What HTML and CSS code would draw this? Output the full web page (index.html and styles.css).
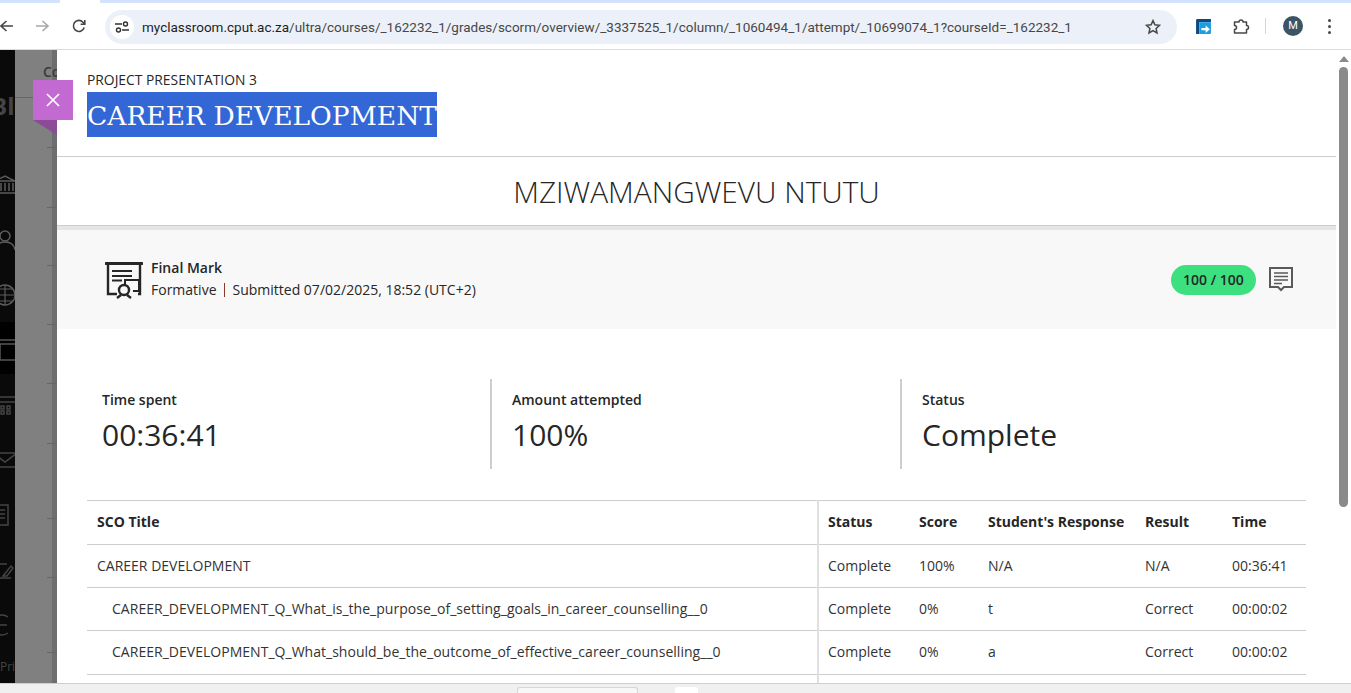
FILE: index.html
```html
<!DOCTYPE html>
<html lang="en">
<head>
  <meta charset="UTF-8">
  <meta name="viewport" content="width=device-width, initial-scale=1.0">
  <title>Career Development</title>
  <link rel="stylesheet" href="styles.css">
</head>
<body>
  <div class="tabstrip">
    <div class="tab-left"></div>
    <div class="tab-active"></div>
    <div class="tab-right"></div>
  </div>

  <header class="toolbar">
    <svg class="nav-icon back" viewBox="0 0 16 16"><path d="M14 8H2M7.500 3L2 8l5.500 5" fill="none" stroke="#474747" stroke-width="1.600"/></svg>
    <svg class="nav-icon forward" viewBox="0 0 16 16"><path d="M2 8h12M8.500 3L14 8l-5.500 5" fill="none" stroke="#a8a8a8" stroke-width="1.600"/></svg>
    <svg class="nav-icon reload" viewBox="0 0 16 16"><path d="M13.200 9.500A5.500 5.500 0 1 1 12 4.200L13.500 6M13.800 2v4.200H9.600" fill="none" stroke="#474747" stroke-width="1.600"/></svg>
    <div class="omnibox">
      <span class="site-info">
        <svg viewBox="0 0 16 16" width="16" height="16"><path d="M1 5h7M8 11h7" stroke="#303030" stroke-width="1.400" fill="none"/><circle cx="11.500" cy="5" r="2" fill="none" stroke="#303030" stroke-width="1.400"/><circle cx="4.500" cy="11" r="2" fill="none" stroke="#303030" stroke-width="1.400"/></svg>
      </span>
      <span class="url"><b>myclassroom.cput.ac.za</b>/ultra/courses/_162232_1/grades/scorm/overview/_3337525_1/column/_1060494_1/attempt/_10699074_1?courseId=_162232_1</span>
      <svg class="star" viewBox="0 0 16 16"><path d="M8 1.600l1.900 4.200 4.600.5-3.400 3.100.9 4.600L8 11.700 4 14l.9-4.600L1.500 6.300l4.600-.5z" fill="none" stroke="#474747" stroke-width="1.500"/></svg>
    </div>
    <svg class="ext-logo" viewBox="0 0 16 16"><path d="M1 15V2a1 1 0 0 1 1-1h13v3H4v11z" fill="#0d4a7f"/><path d="M4 4h11v10a1 1 0 0 1-1 1H4z" fill="#1b9ee0"/><path d="M6 9.500h4V7l4 3.500-4 3.500v-2.500H6z" fill="#fff"/></svg>
    <svg class="ext-puzzle" viewBox="0 0 18 18"><path d="M2.500 5H7a2 2 0 0 1 4 0h3.500v3.500a2 2 0 0 1 0 4V16H2.500v-3.500a2 2 0 0 0 0-4z" fill="none" stroke="#474747" stroke-width="1.500" stroke-linejoin="round"/></svg>
    <div class="toolbar-sep"></div>
    <div class="avatar">M</div>
    <div class="kebab"><i></i><i></i><i></i></div>
  </header>

  <div class="viewport">
    <aside class="course-behind">
      <div class="nav-rail">
        <div class="rail-logo">Bl</div>
        <svg class="rail-icon" viewBox="0 0 24 24"><path d="M2 8l10-5 10 5zM4 10v8M8 10v8M12 10v8M16 10v8M20 10v8M2 20h20" fill="none" stroke="#5c5c5c" stroke-width="1.500"/></svg>
        <svg class="rail-icon" viewBox="0 0 24 24"><circle cx="12" cy="8" r="5" fill="none" stroke="#5c5c5c" stroke-width="1.500"/><path d="M2 22c1-6 5-8 10-8s9 2 10 8" fill="none" stroke="#5c5c5c" stroke-width="1.500"/></svg>
        <svg class="rail-icon" viewBox="0 0 24 24"><circle cx="12" cy="12" r="10" fill="none" stroke="#5c5c5c" stroke-width="1.500"/><path d="M2 12h20M12 2v20M4 6h16M4 18h16" fill="none" stroke="#5c5c5c" stroke-width="1.200"/></svg>
        <svg class="rail-icon" viewBox="0 0 24 24"><path d="M3 2h20v20H3zM7 6h16M7 6v16" fill="none" stroke="#555" stroke-width="1.500"/></svg>
        <svg class="rail-icon" viewBox="0 0 24 24"><path d="M0 4h24M0 9h24M2 13h3v3H2zM8 13h3v3H8zM14 13h3v3h-3zM2 18h3v3H2zM8 18h3v3H8zM14 18h3v3h-3z" fill="none" stroke="#444" stroke-width="1.500"/></svg>
        <svg class="rail-icon" viewBox="0 0 24 24"><path d="M0 5h24v14H0zM0 5l12 9 12-9" fill="none" stroke="#444" stroke-width="1.500"/></svg>
        <svg class="rail-icon" viewBox="0 0 24 24"><path d="M1 2h14v20H1zM4 7h8M4 11h8M4 15h8" fill="none" stroke="#444" stroke-width="1.500"/></svg>
        <svg class="rail-icon" viewBox="0 0 24 24"><path d="M0 6h14M0 20h18M10 18l8-10 2 2-6 8z" fill="none" stroke="#444" stroke-width="1.500"/></svg>
        <svg class="rail-icon" viewBox="0 0 24 24"><path d="M15 4a10 10 0 1 0 0 16M0 12h14M5 7l-5 5 5 5" fill="none" stroke="#444" stroke-width="1.500"/></svg>
        <div class="rail-privacy">Priv</div>
      </div>
      <div class="course-content">
        <div class="course-label">Co</div>
      </div>
    </aside>

    <button class="close-btn">
      <svg viewBox="0 0 14 14" width="14" height="14"><path d="M1 1l12 12M13 1L1 13" stroke="#fff" stroke-width="1.700"/></svg>
    </button>
    <div class="close-fold"></div>

    <main class="panel">
      <div class="panel-head">
        <div class="eyebrow">PROJECT PRESENTATION 3</div>
        <h1 class="panel-title"><span>CAREER DEVELOPMENT</span></h1>
      </div>

      <h2 class="student-name">MZIWAMANGWEVU NTUTU</h2>

      <section class="final-mark">
        <svg class="cert-icon" viewBox="0 0 38 38">
          <path d="M1 2.500h36" stroke="#262626" stroke-width="3" stroke-linecap="round"/>
          <path d="M3 3v30h9M35 3v30h-2" fill="none" stroke="#262626" stroke-width="2.400"/>
          <path d="M7 10h20M7 15h20M7 19.500h10" stroke="#262626" stroke-width="2"/>
          <path d="M20 25v-6h14v11h-6" fill="none" stroke="#262626" stroke-width="2"/>
          <circle cx="19" cy="29" r="5" fill="#f8f8f8" stroke="#262626" stroke-width="2.400"/>
          <path d="M12 37l4-3M26 37l-4-3" stroke="#262626" stroke-width="2.400"/>
        </svg>
        <div class="mark-text">
          <div class="mark-title">Final Mark</div>
          <div class="mark-meta"><span>Formative</span><span class="meta-date">Submitted 07/02/2025, 18:52 (UTC+2)</span></div>
        </div>
        <div class="score-pill">100 / 100</div>
        <svg class="comment-icon" viewBox="0 0 24 25">
          <path d="M1 1h22v19h-8l-3 3-3-3H1z" fill="none" stroke="#5a5a5a" stroke-width="2"/>
          <path d="M5 6h14M5 9.500h14M5 13h14M5 16.500h8" stroke="#5a5a5a" stroke-width="1.600"/>
        </svg>
      </section>

      <section class="stats">
        <div class="stat">
          <div class="stat-label">Time spent</div>
          <div class="stat-value">00:36:41</div>
        </div>
        <div class="stat">
          <div class="stat-label">Amount attempted</div>
          <div class="stat-value">100%</div>
        </div>
        <div class="stat">
          <div class="stat-label">Status</div>
          <div class="stat-value">Complete</div>
        </div>
      </section>

      <table class="sco-table">
        <thead>
          <tr>
            <th class="col-title">SCO Title</th>
            <th class="col-status">Status</th>
            <th class="col-score">Score</th>
            <th class="col-response">Student's Response</th>
            <th class="col-result">Result</th>
            <th class="col-time">Time</th>
          </tr>
        </thead>
        <tbody>
          <tr>
            <td class="col-title">CAREER DEVELOPMENT</td>
            <td class="col-status">Complete</td><td>100%</td><td>N/A</td><td>N/A</td><td>00:36:41</td>
          </tr>
          <tr>
            <td class="col-title child">CAREER_DEVELOPMENT_Q_What_is_the_purpose_of_setting_goals_in_career_counselling__0</td>
            <td class="col-status">Complete</td><td>0%</td><td>t</td><td>Correct</td><td>00:00:02</td>
          </tr>
          <tr class="tall-row">
            <td class="col-title child">CAREER_DEVELOPMENT_Q_What_should_be_the_outcome_of_effective_career_counselling__0</td>
            <td class="col-status">Complete</td><td>0%</td><td>a</td><td>Correct</td><td>00:00:02</td>
          </tr>
          <tr>
            <td class="col-title child">&nbsp;</td>
            <td class="col-status"></td><td></td><td></td><td></td><td></td>
          </tr>
        </tbody>
      </table>
    </main>

    <div class="scrollbar">
      <div class="scroll-arrow"></div>
      <div class="scroll-thumb"></div>
    </div>
  </div>

  <footer class="bottom-bar">
    <div class="bar-field"></div>
    <div class="bar-btn"></div>
  </footer>
</body>
</html>
```

FILE: styles.css
```css
* {
  box-sizing: border-box;
}
html, body {
  margin: 0;
  padding: 0;
  height: 693px;
  overflow: hidden;
}
body {
  font-family: "Open Sans", Arial, sans-serif;
  color: #262626;
  background: #fff;
  display: flex;
  flex-direction: column;
}

/* browser chrome */
.tabstrip {
  height: 3px;
  display: flex;
  background: #d3e3fd;
  flex: none;
}
.tab-left {
  width: 60px;
}
.tab-active {
  width: 40px;
  background: #fff;
}
.tab-right {
  flex: 1;
}
.toolbar {
  height: 47px;
  flex: none;
  display: flex;
  align-items: center;
  background: #fff;
  border-bottom: 1px solid #dadce0;
  border-top-right-radius: 8px;
}
.nav-icon {
  width: 16px;
  height: 16px;
  flex: none;
}
.back {
  margin-left: -1px;
}
.forward {
  margin-left: 19px;
}
.reload {
  margin-left: 21px;
}
.omnibox {
  width: 1072px;
  height: 34px;
  margin-left: 18px;
  margin-top: 1px;
  background: #ecf1f9;
  border-radius: 17px;
  display: flex;
  align-items: center;
  padding-left: 5px;
  flex: none;
}
.site-info {
  width: 24px;
  height: 24px;
  border-radius: 50%;
  background: #fff;
  display: flex;
  align-items: center;
  justify-content: center;
  flex: none;
}
.url {
  font-family: "Roboto", Arial, sans-serif;
  font-size: 13.5px;
  margin-left: 8px;
  color: #474747;
  white-space: nowrap;
  flex: 1;
}
.url b {
  font-weight: 400;
  color: #1f1f1f;
}
.star {
  width: 16px;
  height: 16px;
  margin-right: 16px;
  flex: none;
}
.ext-logo {
  width: 17px;
  height: 17px;
  margin-left: 18px;
  flex: none;
}
.ext-puzzle {
  width: 18px;
  height: 18px;
  margin-left: 20px;
  flex: none;
}
.toolbar-sep {
  width: 1px;
  height: 16px;
  background: #c7d7f0;
  margin-left: 15px;
  flex: none;
}
.avatar {
  width: 20px;
  height: 20px;
  margin-left: 17px;
  border-radius: 50%;
  background: #3c5464;
  color: #fff;
  font-family: "Roboto", Arial, sans-serif;
  font-size: 11px;
  line-height: 20px;
  text-align: center;
  flex: none;
}
.kebab {
  margin-left: 25px;
  display: flex;
  flex-direction: column;
  gap: 3px;
  flex: none;
}
.kebab i {
  width: 3px;
  height: 3px;
  border-radius: 50%;
  background: #474747;
}

/* page behind the panel */
.viewport {
  position: relative;
  flex: 1;
  display: flex;
  min-height: 0;
  overflow: hidden;
}
.course-behind {
  width: 57px;
  flex: none;
  display: flex;
  overflow: hidden;
}
.nav-rail {
  width: 15px;
  flex: none;
  background: linear-gradient(#000, #000) 0 272px / 100% 52px no-repeat, #0a0a0a;
  overflow: hidden;
  display: flex;
  flex-direction: column;
}
.rail-logo {
  color: #444;
  font-weight: 700;
  font-size: 24px;
  line-height: 24px;
  height: 79px;
  margin-top: 44px;
  margin-left: -9px;
  white-space: nowrap;
  flex: none;
}
.rail-icon {
  width: 24px;
  height: 24px;
  margin-left: -7px;
  flex: none;
  margin-bottom: 31px;
}
.rail-privacy {
  font-size: 12px;
  color: #444;
  margin-top: -10px;
  white-space: nowrap;
}
.course-content {
  flex: 1;
  overflow: hidden;
  background:
    linear-gradient(#666, #666) left 0 top 47px / 18px 1px no-repeat,
    linear-gradient(#666, #666) right 0 top 97px / 10px 1px no-repeat,
    linear-gradient(#666, #666) right 0 top 157px / 10px 1px no-repeat,
    linear-gradient(#666, #666) right 0 top 215px / 10px 1px no-repeat,
    linear-gradient(#666, #666) right 0 top 274px / 10px 1px no-repeat,
    linear-gradient(#666, #666) right 0 top 333px / 10px 1px no-repeat,
    linear-gradient(#666, #666) right 0 top 393px / 10px 1px no-repeat,
    linear-gradient(#666, #666) right 0 top 468px / 10px 1px no-repeat,
    linear-gradient(#666, #666) right 0 top 527px / 10px 1px no-repeat,
    linear-gradient(#666, #666) right 0 top 602px / 10px 1px no-repeat,
    linear-gradient(to right, #808080 37px, #6e6e6e 37px);
}
.course-label {
  font-size: 14px;
  font-weight: 600;
  color: #3a3a3a;
  margin-left: 28px;
  margin-top: 12px;
  white-space: nowrap;
}

.close-btn {
  position: absolute;
  left: 33px;
  top: 30px;
  width: 40px;
  height: 40px;
  background: #c26ad1;
  border: none;
  padding: 0;
  display: flex;
  align-items: center;
  justify-content: center;
  z-index: 2;
}
.close-fold {
  position: absolute;
  left: 33px;
  top: 70px;
  width: 24px;
  height: 15px;
  background: #8c4b97;
  clip-path: polygon(0 0, 100% 0, 100% 100%);
  z-index: 2;
}

/* panel */
.panel {
  width: 1279px;
  flex: none;
  background: #fff;
  overflow: hidden;
}
.panel-head {
  height: 107px;
  padding: 20px 30px 0;
  border-bottom: 1px solid #cdcdcd;
}
.eyebrow {
  font-size: 13.850px;
  line-height: 20px;
}
.panel-title {
  margin: 2px 0 0;
  font-family: "DejaVu Serif", "Liberation Serif", serif;
  font-weight: 400;
  font-size: 26.500px;
  line-height: 42px;
}
.panel-title span {
  display: inline-block;
  padding-top: 3px;
  background: #3367d6;
  color: #fff;
  white-space: nowrap;
}
.student-name {
  height: 69px;
  margin: 0;
  font-size: 29.800px;
  font-weight: 300;
  line-height: 70px;
  text-align: center;
  color: #262626;
  border-bottom: 1px solid #cdcdcd;
}
.final-mark {
  height: 103px;
  background: #f8f8f8;
  border-top: 4px solid #e5e5e5;
  display: flex;
  align-items: center;
  padding: 0 43px 0 48px;
}
.cert-icon {
  width: 38px;
  height: 38px;
  flex: none;
}
.mark-text {
  margin: -2px 0 0 8px;
  flex: 1;
}
.mark-title {
  font-size: 14px;
  font-weight: 600;
  line-height: 22px;
}
.mark-meta {
  font-size: 14px;
  line-height: 22px;
  display: flex;
}
.meta-date {
  margin-left: 7px;
  padding-left: 9px;
  position: relative;
}
.meta-date::before {
  content: "";
  position: absolute;
  left: 0;
  top: 4px;
  height: 14px;
  width: 1px;
  background: #8b3a2a;
}
.score-pill {
  width: 85px;
  height: 30px;
  border-radius: 15px;
  background: #3de07f;
  font-size: 14px;
  font-weight: 600;
  line-height: 30px;
  text-align: center;
  flex: none;
}
.comment-icon {
  width: 24px;
  height: 25px;
  margin-left: 13px;
  flex: none;
}

.stats {
  display: flex;
  margin: 50px 30px 31px;
  height: 90px;
}
.stat {
  flex: none;
  width: 410px;
  padding: 11px 0 0 20px;
  border-right: 2px solid #cdcdcd;
}
.stat:first-child {
  width: 405px;
  padding-left: 15px;
}
.stat:last-child {
  width: 404px;
  border-right: none;
}
.stat-label {
  font-size: 14px;
  font-weight: 600;
  line-height: 20px;
}
.stat-value {
  font-size: 30px;
  line-height: 50px;
}

.sco-table {
  width: 1219px;
  margin-left: 30px;
  border-collapse: collapse;
  table-layout: fixed;
  font-size: 14px;
  border-top: 1px solid #cdcdcd;
}
.sco-table th,
.sco-table td {
  text-align: left;
  padding: 0 0 2px 10px;
  border-bottom: 1px solid #cdcdcd;
  white-space: nowrap;
}
.sco-table th {
  height: 44px;
  font-weight: 700;
}
.sco-table td {
  height: 43px;
  color: #333;
}
.sco-table .tall-row td {
  height: 44px;
}
.sco-table .col-title {
  width: 731px;
  border-right: 2px solid #e0e0e0;
}
.sco-table .child {
  padding-left: 25px;
  letter-spacing: 0.025px;
}
.sco-table .col-status {
  width: 91px;
  padding-left: 9px;
}
.col-score {
  width: 69px;
}
.col-response {
  width: 157px;
}
.col-result {
  width: 87px;
}
.col-time {
  width: 84px;
}

.scrollbar {
  flex: 1;
  background: #fff;
  display: flex;
  flex-direction: column;
  align-items: center;
  padding-top: 6px;
}
.scroll-arrow {
  width: 0;
  height: 0;
  border-left: 5px solid transparent;
  border-right: 5px solid transparent;
  border-bottom: 6px solid #8a8a8a;
}
.scroll-thumb {
  width: 9px;
  height: 440px;
  margin-top: 5px;
  background: #8a8a8a;
  border-radius: 5px;
}

.bottom-bar {
  height: 10px;
  flex: none;
  background: #f0f0f0;
  border-top: 1px solid #cfcfcf;
  display: flex;
  align-items: flex-start;
  padding: 3px 0 0 517px;
}
.bar-field {
  width: 121px;
  height: 6px;
  background: #f7f7f7;
  border: 1px solid #d6d6d6;
  border-bottom: none;
  border-radius: 3px 3px 0 0;
}
.bar-btn {
  width: 23px;
  height: 7px;
  margin-left: 37px;
  background: #fff;
  border-radius: 3px 3px 0 0;
}
```
